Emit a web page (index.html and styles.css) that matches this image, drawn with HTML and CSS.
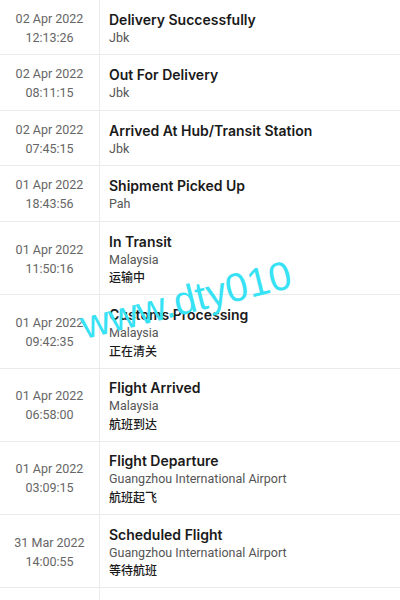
FILE: index.html
```html
<!DOCTYPE html>
<html>
<head>
<meta charset="utf-8">
<link rel="stylesheet" href="styles.css">
</head>
<body>
<div class="list">
  <div class="row"><div class="when"><div>02 Apr 2022</div><div>12:13:26</div></div><div class="what"><div class="title">Delivery Successfully</div><div class="sub">Jbk</div></div></div>
  <div class="row"><div class="when"><div>02 Apr 2022</div><div>08:11:15</div></div><div class="what"><div class="title">Out For Delivery</div><div class="sub">Jbk</div></div></div>
  <div class="row"><div class="when"><div>02 Apr 2022</div><div>07:45:15</div></div><div class="what"><div class="title">Arrived At Hub/Transit Station</div><div class="sub">Jbk</div></div></div>
  <div class="row"><div class="when"><div>01 Apr 2022</div><div>18:43:56</div></div><div class="what"><div class="title">Shipment Picked Up</div><div class="sub">Pah</div></div></div>
  <div class="row"><div class="when"><div>01 Apr 2022</div><div>11:50:16</div></div><div class="what"><div class="title">In Transit</div><div class="sub">Malaysia</div><div class="cn">运输中</div></div></div>
  <div class="row"><div class="when"><div>01 Apr 2022</div><div>09:42:35</div></div><div class="what"><div class="title">Customs Processing</div><div class="sub">Malaysia</div><div class="cn">正在清关</div></div></div>
  <div class="row"><div class="when"><div>01 Apr 2022</div><div>06:58:00</div></div><div class="what"><div class="title">Flight Arrived</div><div class="sub">Malaysia</div><div class="cn">航班到达</div></div></div>
  <div class="row"><div class="when"><div>01 Apr 2022</div><div>03:09:15</div></div><div class="what"><div class="title">Flight Departure</div><div class="sub">Guangzhou International Airport</div><div class="cn">航班起飞</div></div></div>
  <div class="row"><div class="when"><div>31 Mar 2022</div><div>14:00:55</div></div><div class="what"><div class="title">Scheduled Flight</div><div class="sub">Guangzhou International Airport</div><div class="cn">等待航班</div></div></div>
  <div class="row"><div class="when"><div>31 Mar 2022</div><div>10:21:08</div></div><div class="what"><div class="title">Departed Facility</div><div class="sub">Guangzhou</div><div class="cn">离开处理中心</div></div></div>
</div>
<div class="watermark">www.dty010</div>
</body>
</html>
```
FILE: styles.css
```css
html, body {
  margin: 0;
  padding: 0;
  background: #fff;
  overflow: hidden;
}
body {
  width: 400px;
  height: 600px;
  position: relative;
  font-family: Roboto, "Noto Sans CJK SC", sans-serif;
}
.list {
  display: flex;
  flex-direction: column;
}
.row {
  display: grid;
  grid-template-columns: 100px 1fr;
  border-bottom: 1px solid #ebebeb;
}
.when {
  border-right: 1px solid #ebebeb;
  display: flex;
  flex-direction: column;
  justify-content: center;
  align-items: center;
  font-size: 12.5px;
  line-height: 19px;
  color: #666;
  padding-top: 1px;
}
.what {
  padding: 9.6px 8px 8.1px 9px;
}
.title {
  font-family: Inter, Roboto, sans-serif;
  font-size: 14px;
  font-weight: 600;
  line-height: 19px;
  color: #1a1a1a;
}
.sub {
  font-size: 12.5px;
  line-height: 17.8px;
  color: #555;
}
.cn {
  font-size: 12px;
  line-height: 17.8px;
  color: #1a1a1a;
  font-family: "Noto Sans CJK SC", sans-serif;
  font-weight: 500;
}
.watermark {
  position: absolute;
  left: 86px;
  top: 305px;
  font-family: "Liberation Sans", Arial, sans-serif;
  font-size: 40px;
  color: #36e2f3;
  transform: rotate(-14deg);
  transform-origin: left bottom;
  white-space: nowrap;
  line-height: 1;
}
```
